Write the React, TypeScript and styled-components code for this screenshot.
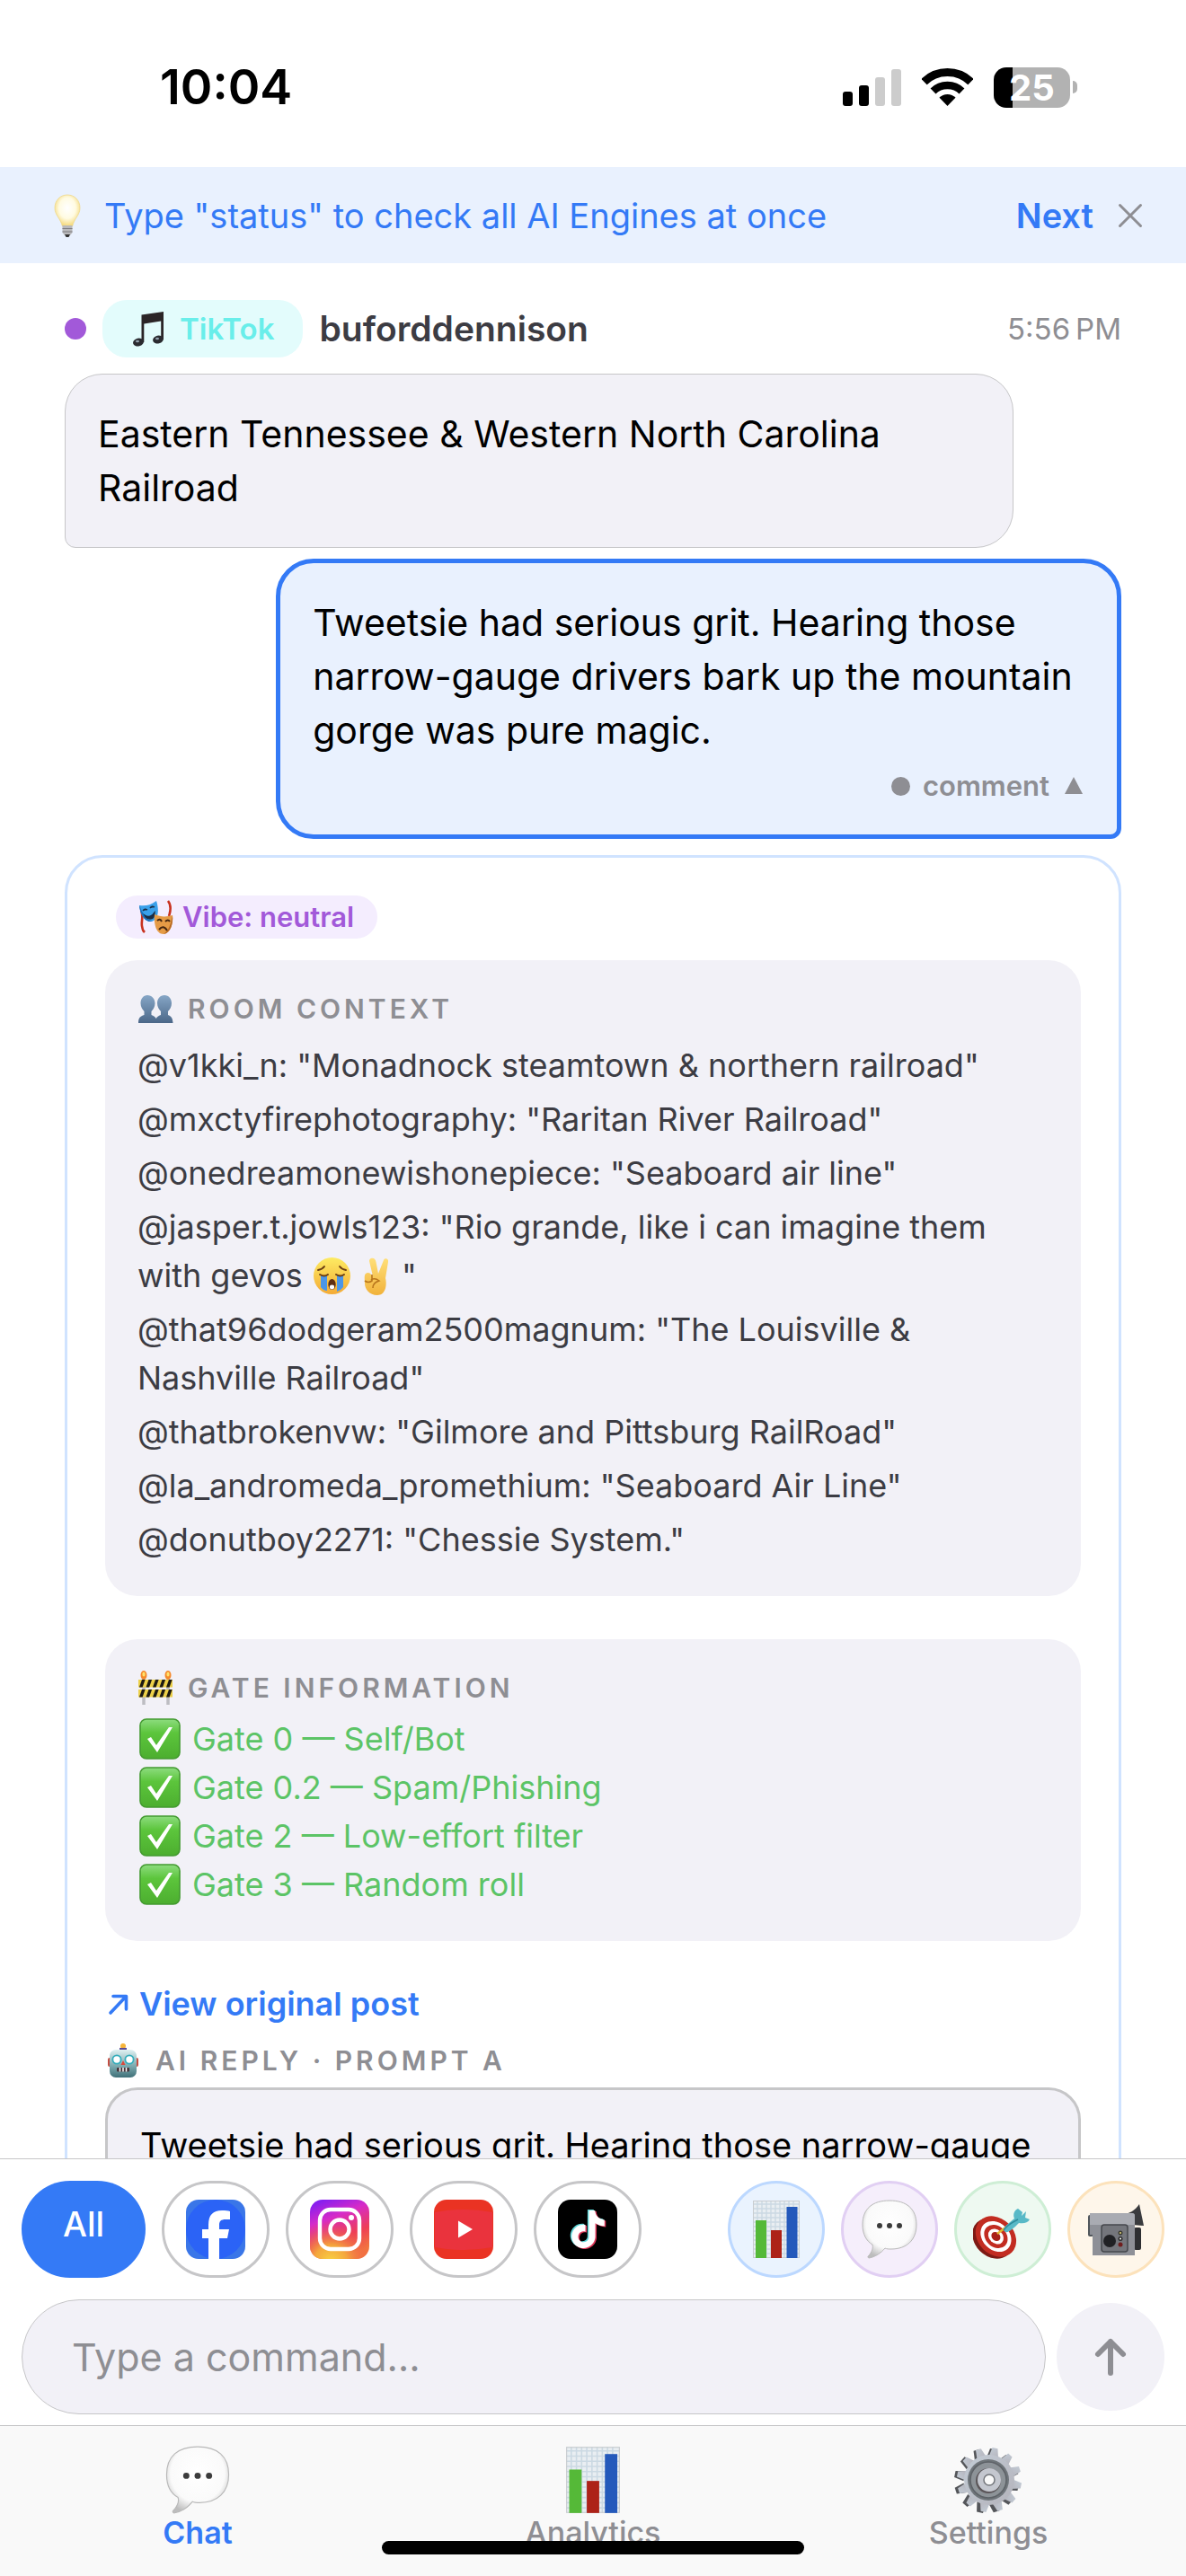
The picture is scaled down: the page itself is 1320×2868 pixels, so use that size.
import React, { useState } from "react";
import styled, { createGlobalStyle } from "styled-components";

const GlobalStyle = createGlobalStyle`
  *, *::before, *::after { box-sizing: border-box; }
  html, body { margin: 0; padding: 0; background: #ffffff; }
  body {
    font-family: Inter, "Liberation Sans", sans-serif;
    color: #000000;
    -webkit-font-smoothing: antialiased;
  }
  button, input { font: inherit; color: inherit; margin: 0; }
  button { background: none; border: 0; padding: 0; cursor: pointer; }
  svg { display: block; flex: none; }
`;

/* ---------- layout ---------- */

const Screen = styled.div`
  display: flex;
  flex-direction: column;
  height: 100vh;
  overflow: hidden;
  position: relative;
`;

const StatusBar = styled.header`
  display: flex;
  justify-content: space-between;
  align-items: center;
  padding: 67px 121px 59px 178px;
`;

const Clock = styled.time`
  font-size: 54px;
  line-height: 60px;
  font-weight: 600;
`;

const StatusIcons = styled.div`
  display: flex;
  align-items: center;
  gap: 23px;
`;

const Battery = styled.div`
  display: flex;
  align-items: center;
  gap: 3px;
`;

const BatteryBody = styled.div<{ $level: number }>`
  width: 85px;
  border-radius: 14px;
  background: linear-gradient(to right, #000 ${(p) => p.$level}%, #b2b2b2 ${(p) => p.$level}%);
  color: #fff;
  font-size: 40px;
  font-weight: 700;
  line-height: 45px;
  text-align: center;
`;

const BatteryTip = styled.div`
  width: 5px;
  height: 14px;
  border-radius: 0 6px 6px 0;
  background: #b2b2b2;
`;

const Tip = styled.section`
  display: flex;
  align-items: center;
  padding: 27px 48px 26px 51px;
  gap: 17px;
  background: #e9f1fe;
  color: #347af6;
  font-size: 38px;
  line-height: 54px;
`;

const TipText = styled.p`
  flex: 1;
  margin: 0;
`;

const TipNext = styled.button`
  font-weight: 600;
  line-height: 54px;
  margin-right: 10px;
`;

const Feed = styled.main`
  flex: 1;
  min-height: 0;
  overflow: hidden;
  display: flex;
  flex-direction: column;
  padding: 41px 72px 0;
`;

const MessageHead = styled.div`
  display: flex;
  align-items: center;
  gap: 18px;
  margin-bottom: 18px;
  flex: none;
`;

const Dot = styled.span<{ $size: number; $color: string }>`
  flex: none;
  width: ${(p) => p.$size}px;
  height: ${(p) => p.$size}px;
  border-radius: 50%;
  background: ${(p) => p.$color};
`;

const SourceTag = styled.span`
  display: flex;
  align-items: center;
  gap: 15px;
  padding: 0 32px 0 31px;
  border-radius: 27px;
  background: #e3fcfc;
  color: #69eeea;
  font-size: 33px;
  line-height: 64px;
  font-weight: 600;
`;

const Author = styled.strong`
  flex: 1;
  color: #3c3c43;
  font-size: 39px;
  line-height: 54px;
  font-weight: 600;
`;

const Stamp = styled.time`
  color: #8e8e93;
  font-size: 33px;
  line-height: 48px;
`;

const Bubble = styled.div<{ $own?: boolean }>`
  flex: none;
  align-self: ${(p) => (p.$own ? "flex-end" : "flex-start")};
  width: ${(p) => (p.$own ? "80%" : "80vw")};
  padding: 36px;
  border: ${(p) => (p.$own ? "5px solid #347af6" : "1px solid #c6c6c8")};
  border-radius: ${(p) => (p.$own ? "42px 42px 12px 42px" : "42px 42px 42px 12px")};
  background: ${(p) => (p.$own ? "#e9f1fe" : "#f2f1f7")};
  margin-bottom: ${(p) => (p.$own ? "18px" : "12px")};
`;

const BubbleText = styled.p`
  margin: 0;
  font-size: 41px;
  line-height: 60px;
`;

const BubbleMeta = styled.button`
  display: flex;
  align-items: center;
  gap: 14px;
  margin: 14px 0 0 auto;
  color: #8e8e93;
  font-size: 31px;
  line-height: 36px;
  font-weight: 600;
`;

const Card = styled.article`
  flex: none;
  display: flex;
  flex-direction: column;
  align-items: stretch;
  padding: 42px 42px 60px;
  border: 3px solid #d0e3ff;
  border-radius: 42px;
`;

const Vibe = styled.span`
  align-self: flex-start;
  display: flex;
  align-items: center;
  gap: 10px;
  margin: 0 0 24px 12px;
  padding: 0 26px 0 24px;
  border-radius: 24px;
  background: #f4edfe;
  color: #a259d9;
  font-size: 31px;
  line-height: 48px;
  font-weight: 600;
`;

const Panel = styled.section`
  padding: 36px;
  margin-bottom: 48px;
  border-radius: 36px;
  background: #f2f1f7;
`;

const Heading = styled.h2`
  display: flex;
  align-items: center;
  gap: 16px;
  height: 36px;
  margin: 0 0 12px;
  color: #8e8e93;
  font-size: 30px;
  line-height: 36px;
  font-weight: 600;
  letter-spacing: 4px;
`;

const List = styled.ul<{ $color: string; $gap: number }>`
  list-style: none;
  margin: 0;
  padding: 0;
  color: ${(p) => p.$color};
  font-size: 36px;
  line-height: 54px;

  li { padding-top: ${(p) => p.$gap}px; }
`;

const Inline = styled.span`
  display: inline-block;
  vertical-align: -10px;
  height: 45px;
  margin-right: 5px;
`;

const Gate = styled.li`
  display: flex;
  align-items: center;
  gap: 10px;
`;

const PostLink = styled.a`
  align-self: flex-start;
  display: flex;
  align-items: center;
  gap: 8px;
  margin: -5px 0 18px;
  color: #347af6;
  font-size: 36px;
  line-height: 54px;
  font-weight: 600;
  text-decoration: none;
`;

const Draft = styled.p`
  margin: 0;
  padding: 36px;
  border: 3px solid #c6c6c8;
  border-radius: 36px;
  background: #f2f1f7;
  font-size: 38px;
  line-height: 50px;
`;

const Composer = styled.footer`
  flex: none;
  padding: 24px 24px 12px;
  border-top: 1px solid #c6c6c8;
  background: #fff;
`;

const Row = styled.div`
  display: flex;
  align-items: center;
  justify-content: space-between;
`;

const Group = styled.div`
  display: flex;
  gap: 18px;
`;

const AllFilter = styled.button`
  height: 108px;
  padding: 0 46px 12px;
  border-radius: 54px;
  background: #347af6;
  color: #fff;
  font-size: 38px;
  font-weight: 500;
`;

const PlatformFilter = styled.button`
  display: grid;
  place-items: center;
  width: 120px;
  height: 108px;
  border: 3px solid #c6c6c8;
  border-radius: 54px;
`;

const Shortcut = styled.button<{ $fill: string; $line: string }>`
  display: grid;
  place-items: center;
  width: 108px;
  height: 108px;
  border: 3px solid ${(p) => p.$line};
  border-radius: 50%;
  background: ${(p) => p.$fill};
`;

const CommandForm = styled.form`
  display: flex;
  align-items: center;
  gap: 12px;
  margin-top: 24px;
`;

const Command = styled.input`
  flex: 1;
  min-width: 0;
  height: 128px;
  padding: 0 55px;
  border: 1px solid #c6c6c8;
  border-radius: 64px;
  background: #f2f1f7;
  font-size: 43px;
  outline: none;

  &::placeholder { color: #8e8e93; opacity: 1; }
`;

const Send = styled.button`
  display: grid;
  place-items: center;
  width: 120px;
  height: 120px;
  border-radius: 50%;
  background: #f2f1f7;
`;

const Tabs = styled.nav`
  flex: none;
  display: flex;
  border-top: 1px solid #c6c6c8;
  background: #f9f9f9;
`;

const Tab = styled.button<{ $active: boolean }>`
  flex: 1 1 0;
  display: flex;
  flex-direction: column;
  align-items: center;
  gap: 1px;
  padding: 22px 0 28px;
  color: ${(p) => (p.$active ? "#347af6" : "#8e8e93")};
  font-size: 34px;
  line-height: 40px;
  font-weight: ${(p) => (p.$active ? 600 : 500)};
`;

const HomeIndicator = styled.div`
  position: absolute;
  left: 50%;
  bottom: 24px;
  width: 470px;
  height: 15px;
  margin-left: -235px;
  border-radius: 8px;
  background: #000;
`;

/* ---------- drawings ---------- */

type IconProps = { size: number };

const Signal = () => (
  <svg width="65" height="42" viewBox="0 0 65 42">
    <rect x="0" y="26" width="11" height="16" rx="3" />
    <rect x="18" y="19" width="11" height="23" rx="3" />
    <rect x="36" y="10" width="11" height="32" rx="3" fill="#ccc" />
    <rect x="54" y="1" width="11" height="41" rx="3" fill="#ccc" />
  </svg>
);

const Wifi = () => (
  <svg width="57" height="42" viewBox="0 0 57 42">
    <clipPath id="wifi"><path d="M28.500 42L-3 9.500V-5H60V9.500z" /></clipPath>
    <g clipPath="url(#wifi)" fill="none" stroke="#000">
      <circle cx="28.500" cy="42" r="37.500" strokeWidth="9" />
      <circle cx="28.500" cy="42" r="23" strokeWidth="8.500" />
      <circle cx="28.500" cy="42" r="13" fill="#000" stroke="none" />
    </g>
  </svg>
);

const Bulb = () => (
  <svg width="48" height="50" viewBox="0 0 48 50">
    <defs>
      <radialGradient id="bulb" cx=".5" cy=".42" r=".6">
        <stop offset="0" stopColor="#fff" /><stop offset=".55" stopColor="#fffbe2" /><stop offset="1" stopColor="#f3d56e" />
      </radialGradient>
    </defs>
    <path d="M24 2c8.500 0 14 6.500 14 14.500 0 8-6 11-8.500 20.500h-11C16 27.500 10 24.500 10 16.500 10 8.500 15.500 2 24 2z" fill="url(#bulb)" stroke="#efd88c" strokeWidth=".8" />
    <path d="M18.500 36h11v8l-2.500 3h-6l-2.500-3z" fill="#b9b9bb" />
    <path d="M18.500 39.500h11M18.500 43h11" stroke="#7d7d80" strokeWidth="1.200" />
    <path d="M21 46h6l-1.500 3h-3z" fill="#333" />
  </svg>
);

const Close = () => (
  <svg width="28" height="28" viewBox="0 0 28 28" fill="none" stroke="#8e8e93" strokeWidth="3" strokeLinecap="round">
    <path d="M2.500 2.500l23 23M25.500 2.500l-23 23" />
  </svg>
);

const Note = ({ size }: IconProps) => (
  <svg width={size} height={size} viewBox="0 0 40 40">
    <path d="M12.500 4.500L37 1v31h-2.800V11.500L15.300 14.500V35h-2.800z" fill="#2b2527" />
    <ellipse cx="9" cy="35" rx="6" ry="4.500" fill="#2b2b30" transform="rotate(-14 9 35)" />
    <ellipse cx="31" cy="32" rx="6" ry="4.500" fill="#2b2b30" transform="rotate(-14 31 32)" />
    <ellipse cx="8" cy="34" rx="2" ry="1.300" fill="#93a0ad" /><ellipse cx="30" cy="31" rx="2" ry="1.300" fill="#93a0ad" />
  </svg>
);

const Masks = ({ size }: IconProps) => (
  <svg width={size} height={size} viewBox="0 0 40 40">
    <path d="M4 13c3 6 0 12 1 17s1 5 3 7M34 2c4 5 3 11 1 17" fill="none" stroke="#c8321f" strokeWidth="2.600" />
    <path d="M2 7c7 1 12 0 19-5 3 9 3 20-5 23C8 26 3 17 2 7z" fill="#3aa0ea" />
    <path d="M2 7c4 9 7 15 14 18-8 1-13-8-14-18z" fill="#1c6fb8" />
    <path d="M6 13q2-3 5-1M14 10q2-3 5-1M8 18q6 4 11-3 0 7-5 7-4 0-6-4z" fill="#1b2d45" stroke="#1b2d45" strokeWidth="1.400" />
    <path d="M19 17c7 3 13 3 20 1 1 9-2 20-10 21-8 0-11-11-10-22z" fill="#e59b46" />
    <path d="M39 18c1 9-2 20-10 21 6-4 8-11 10-21z" fill="#b86a24" />
    <path d="M22 24q3-3 5 1M31 25q3-3 5 0M24 34q5-6 9 1" fill="none" stroke="#442610" strokeWidth="2" />
  </svg>
);

const People = ({ size }: IconProps) => (
  <svg width={size} height={size} viewBox="0 0 40 40">
    <defs><linearGradient id="ppl" x1="0" y1="0" x2="0" y2="1"><stop offset="0" stopColor="#86a6c6" /><stop offset="1" stopColor="#4b6788" /></linearGradient></defs>
    <path d="M11 5c5 0 8.500 4 8.500 9 0 4-2 7-4 9v4c3 1.500 6 2 6.500 9H1c0-6 2-7.500 6.500-9v-4c-2-2-4-5-4-9 0-5 3-9 7.500-9z" fill="url(#ppl)" />
    <path d="M30 5c5 0 8 4 8 9 0 4-2 7-4 9v4c3 1.500 5 2 5.500 9H20c0-6 2-7.500 6-9v-4c-2-2-4-5-4-9 0-5 3-9 8-9z" fill="url(#ppl)" />
  </svg>
);

const Barrier = ({ size }: IconProps) => (
  <svg width={size} height={size} viewBox="0 0 40 40">
    <path d="M7 10v29M34 10v29" stroke="#bdbdc2" strokeWidth="3.500" />
    {[7, 34].map((x) => (
      <g key={x}><ellipse cx={x} cy="6" rx="3.500" ry="5" fill="#f58a2c" /><ellipse cx={x} cy="5" rx="1.600" ry="2.600" fill="#ffe36b" /></g>
    ))}
    {[11, 22].map((y) => (
      <g key={y}>
        <rect x="1" y={y} width="38" height="8.500" fill="#ecd049" />
        {[2, 9.5, 17, 24.5, 32].map((x) => (
          <path key={x} d={`M${x} ${y + 8.5}l3-8.500h3.600l-3 8.500z`} fill="#1c1a12" />
        ))}
      </g>
    ))}
  </svg>
);

const Robot = ({ size }: IconProps) => (
  <svg width={size} height={size} viewBox="0 0 40 40">
    <defs><linearGradient id="bot" x1="0" y1="0" x2="0" y2="1"><stop offset="0" stopColor="#dff1f2" /><stop offset=".6" stopColor="#7aa8ad" /><stop offset="1" stopColor="#3f7078" /></linearGradient></defs>
    <circle cx="20" cy="4" r="3" fill="#f6b53a" /><path d="M16 6h8v4h-8z" fill="#5a4a94" />
    <rect x="3" y="17" width="4" height="10" rx="2" fill="#c44d42" /><rect x="33" y="17" width="4" height="10" rx="2" fill="#c44d42" />
    <rect x="5" y="8" width="30" height="31" rx="7" fill="url(#bot)" />
    <circle cx="13" cy="19" r="4.600" fill="#fff" stroke="#35aebc" strokeWidth="1.800" /><circle cx="27" cy="19" r="4.600" fill="#fff" stroke="#35aebc" strokeWidth="1.800" />
    <path d="M20 20l2.500 5h-5z" fill="#d9493c" />
    <rect x="13" y="28" width="14" height="4.500" rx="1" fill="#45343a" /><path d="M16.500 28v4.500M20 28v4.500M23.500 28v4.500" stroke="#fff" strokeWidth="1.500" />
  </svg>
);

const CryFace = () => (
  <svg width="45" height="45" viewBox="0 0 45 45">
    <defs><linearGradient id="cry" x1="0" y1="0" x2="0" y2="1"><stop offset="0" stopColor="#fdeb62" /><stop offset="1" stopColor="#f4ab36" /></linearGradient></defs>
    <circle cx="22.500" cy="22.500" r="20.500" fill="url(#cry)" />
    <path d="M10 22h7v17q-4 0-7-4zM28 22h7v13q-3 4-7 5z" fill="#4b96e8" />
    <path d="M7 16q5-1 7-4M38 16q-5-1-7-4M9 21q5 3 9 0M27 21q5 3 9 0" fill="none" stroke="#6b3e12" strokeWidth="2" strokeLinecap="round" />
    <ellipse cx="22.500" cy="32" rx="4.200" ry="6" fill="#5f2f12" /><ellipse cx="22.500" cy="35" rx="2.600" ry="2.400" fill="#fff" />
  </svg>
);

const Victory = () => (
  <svg width="45" height="45" viewBox="0 0 45 45">
    <defs><linearGradient id="vic" x1="0" y1="0" x2="0" y2="1"><stop offset="0" stopColor="#ffdf78" /><stop offset="1" stopColor="#f1b23a" /></linearGradient></defs>
    <path d="M16 3c3-1 5 1 5.500 4L24 20l6-15c1-3 6-2 5 2l-3 18c2 8 0 19-9 19-9 0-14-7-14-13 0-5-1-9 1-11s5-1 6 1l2 2-4-17c0-1.500.5-2.500 2-3z" fill="url(#vic)" />
    <path d="M9 28q4 3 8 0v-7M16 27q4-3 9 1-7 2-7 8" fill="none" stroke="#b9761c" strokeWidth="1.600" />
  </svg>
);

const Check = () => (
  <svg width="51" height="48" viewBox="0 0 51 48">
    <defs><linearGradient id="chk" x1="0" y1="0" x2="0" y2="1"><stop offset="0" stopColor="#8ddc7f" /><stop offset=".35" stopColor="#5cc53c" /><stop offset="1" stopColor="#4cae2f" /></linearGradient></defs>
    <rect x="3" y="2" width="44" height="44" rx="7" fill="url(#chk)" stroke="#439a30" strokeWidth="1.600" />
    <path d="M11 24l4-2 6 9 14-20h4L22 39z" fill="#fff" />
  </svg>
);

const ArrowNE = () => (
  <svg width="30" height="30" viewBox="0 0 30 30" fill="none" stroke="#347af6" strokeWidth="3.600" strokeLinecap="round" strokeLinejoin="round">
    <path d="M6 25L23 7M9 6.500h14.500V21" />
  </svg>
);

const Chart = ({ size }: IconProps) => (
  <svg width={size} height={size} viewBox="0 0 66 66">
    <rect x="7" y="1" width="52" height="64" fill="#e9eef2" />
    <path d="M7 5h52M7 10h52M7 15h52M7 20h52M7 25h52M7 30h52M7 35h52M7 40h52M7 45h52M7 50h52M7 55h52M7 60h52M12 1v64M17 1v64M22 1v64M27 1v64M32 1v64M37 1v64M42 1v64M47 1v64M52 1v64" stroke="#cbd9e3" strokeWidth="1.400" />
    <rect x="7.500" y="1.500" width="51" height="63" fill="none" stroke="#c9cdd0" />
    <rect x="10" y="23" width="12" height="42" fill="#55b938" />
    <rect x="27" y="34" width="12" height="31" fill="#ad2218" />
    <rect x="44.500" y="8" width="12" height="57" fill="#2459bb" />
  </svg>
);

const Speech = ({ size }: IconProps) => (
  <svg width={size} height={size} viewBox="0 0 66 66">
    <defs><radialGradient id="spk" cx=".5" cy=".4" r=".62"><stop offset="0" stopColor="#fff" /><stop offset=".7" stopColor="#fafafa" /><stop offset="1" stopColor="#bdbdbd" /></radialGradient></defs>
    <path d="M33 1c19 0 30 9 30 27 0 17-11 27-28 27-3 0-5 0-7-1-4 5-11 10-18 11-2-1-1-2 1-4 3-4 4-8 3-11C7 46 3 38 3 28 3 10 14 1 33 1z" fill="url(#spk)" stroke="#b9b9b9" strokeWidth="1" />
    <g fill="#3c3c3c"><circle cx="22" cy="29" r="3" /><circle cx="33" cy="29" r="3" /><circle cx="44" cy="29" r="3" /></g>
  </svg>
);

const Target = ({ size }: IconProps) => (
  <svg width={size} height={size} viewBox="0 0 66 66">
    <g transform="rotate(45 24 41)">
      <ellipse cx="24" cy="44" rx="25" ry="20" fill="#7d1a14" />
      <ellipse cx="25" cy="40" rx="25" ry="20" fill="#c22c21" />
      <ellipse cx="25" cy="40" rx="19" ry="15" fill="#fff" />
      <ellipse cx="25" cy="40" rx="14.500" ry="11.500" fill="#c22c21" />
      <ellipse cx="25" cy="40" rx="9.500" ry="7.500" fill="#fff" />
      <ellipse cx="25" cy="40" rx="5.500" ry="4.500" fill="#a92018" />
    </g>
    <path d="M27 38l9-7" stroke="#e4b92e" strokeWidth="2.400" />
    <path d="M34 34c0-4 5-7 12-13-2-5 0-9 4-11l5 4-1 4 5-5-1 7 5 2c-2 4-7 5-12 4-6 6-11 11-15 10z" fill="#58b9c7" />
    <path d="M34 34c4-6 10-9 16-12" stroke="#2e8b9b" strokeWidth="1.600" fill="none" />
  </svg>
);

const Camera = ({ size }: IconProps) => (
  <svg width={size} height={size} viewBox="0 0 66 66">
    <path d="M37 17c12-1 17-5 22-12l5 24-12-1z" fill="#3a3b3e" />
    <rect x="53" y="31" width="8" height="25" rx="2" fill="#2e2f32" />
    <rect x="2" y="17" width="6" height="24" rx="2" fill="#50565c" />
    <path d="M4 15h47q3 0 3 3v44H7V39H4z" fill="#8e9097" />
    <path d="M4 15h47q3 0 3 3v10H4z" fill="#a9abb2" />
    <rect x="17" y="28" width="29" height="30" rx="3" fill="#74767c" stroke="#46484d" strokeWidth="1.500" />
    <circle cx="26" cy="46" r="7" fill="#202124" />
    <circle cx="38" cy="37" r="2.500" fill="#3b3b33" /><circle cx="38" cy="43.500" r="2.500" fill="#2c2c2c" /><circle cx="38" cy="50" r="2.500" fill="#6f1d1d" />
    <circle cx="38" cy="37" r="1" fill="#e6d778" /><circle cx="38" cy="43.500" r="1" fill="#fff" />
  </svg>
);

const Gear = ({ size }: IconProps) => {
  const teeth = Array.from({ length: 12 }, (_, i) => i * 30 + 12);
  return (
    <svg width={size} height={size} viewBox="0 0 76 76">
      <defs><linearGradient id="gear" x1="0" y1="0" x2="1" y2="1"><stop offset="0" stopColor="#c3ccd6" /><stop offset="1" stopColor="#b4b3bb" /></linearGradient></defs>
      <g fill="#54565a" transform="translate(-2 1)">
        {teeth.map((a) => <path key={a} d="M32.500 13l2-11h7l2 11z" transform={`rotate(${a} 38 38)`} />)}
      </g>
      <g fill="url(#gear)">
        {teeth.map((a) => <path key={a} d="M33 13l2-11h6l3 11z" transform={`rotate(${a} 39 38)`} />)}
        <circle cx="39" cy="38" r="28" />
      </g>
      <circle cx="38" cy="38" r="23" fill="#6f757a" />
      <circle cx="38" cy="38" r="20" fill="#8d9398" stroke="#5d6267" strokeWidth="1.500" />
      <circle cx="38" cy="39" r="14" fill="#5b5659" />
      <circle cx="39" cy="38" r="9.500" fill="#f9f9f9" stroke="#c4c7cf" strokeWidth="7" />
      <circle cx="39" cy="38" r="6" fill="none" stroke="#74777c" strokeWidth="1.500" />
    </svg>
  );
};

const Facebook = () => (
  <svg width="66" height="66" viewBox="0 0 66 66">
    <clipPath id="sq"><rect width="66" height="66" rx="14" /></clipPath>
    <g clipPath="url(#sq)">
      <rect width="66" height="66" fill="#3a76e8" />
      <circle cx="33" cy="33" r="33" fill="#2b63f6" />
      <path d="M25 66V43h-7V33h7v-5c0-11 5-16 15-16 4 0 7 .4 9 1v9h-5c-5 0-7 2-7 6v5h11l-2 10h-9v23z" fill="#fff" />
    </g>
  </svg>
);

const Instagram = () => (
  <svg width="66" height="66" viewBox="0 0 66 66">
    <defs>
      <linearGradient id="igA" x1=".1" y1="0" x2=".5" y2="1"><stop offset="0" stopColor="#7a1cf5" /><stop offset=".35" stopColor="#d62bc8" /><stop offset=".7" stopColor="#ee3e55" /><stop offset="1" stopColor="#f2783c" /></linearGradient>
      <radialGradient id="igB" cx=".35" cy="1.050" r=".7"><stop offset="0" stopColor="#f8d343" /><stop offset=".4" stopColor="#f4a63d" /><stop offset="1" stopColor="#ee3e55" stopOpacity="0" /></radialGradient>
    </defs>
    <rect width="66" height="66" rx="14" fill="url(#igA)" /><rect width="66" height="66" rx="14" fill="url(#igB)" />
    <g fill="none" stroke="#fff" strokeWidth="4.400"><rect x="11" y="11" width="44" height="44" rx="12" /><circle cx="33" cy="33" r="10.500" /></g>
    <circle cx="46" cy="20" r="3" fill="#fff" />
  </svg>
);

const YouTube = () => (
  <svg width="66" height="66" viewBox="0 0 66 66">
    <rect width="66" height="66" rx="14" fill="#ea3323" />
    <path d="M1 14Q33 8 65 14V53Q33 59 1 53z" fill="#ea333d" />
    <path d="M27 23.500L43 33 27 42.500z" fill="#fff" />
  </svg>
);

const NOTE_PATH =
  "M12.525.02c1.31-.02 2.61-.01 3.91-.02.08 1.53.63 3.09 1.75 4.17 1.12 1.11 2.7 1.62 4.24 1.79v4.03c-1.44-.05-2.89-.35-4.2-.97-.57-.26-1.1-.59-1.62-.93-.01 2.92.01 5.84-.02 8.75-.08 1.4-.54 2.79-1.35 3.94-1.31 1.92-3.58 3.17-5.91 3.21-1.43.08-2.86-.31-4.08-1.03-2.02-1.19-3.44-3.37-3.65-5.71-.02-.5-.03-1-.01-1.49.18-1.9 1.12-3.72 2.58-4.96 1.66-1.44 3.98-2.13 6.15-1.72.02 1.48-.04 2.96-.04 4.44-.99-.32-2.15-.23-3.02.37-.63.41-1.11 1.04-1.36 1.75-.21.51-.15 1.07-.14 1.61.24 1.64 1.82 3.02 3.5 2.87 1.12-.01 2.19-.66 2.77-1.61.19-.33.4-.67.41-1.06.1-1.79.06-3.57.07-5.36.01-4.03-.01-8.05.02-12.07z";

const TikTok = () => (
  <svg width="66" height="66" viewBox="0 0 66 66">
    <rect width="66" height="66" rx="14" fill="#000" />
    <path d={NOTE_PATH} fill="#5fd6d8" transform="translate(11 11) scale(1.750)" />
    <path d={NOTE_PATH} fill="#e0395a" transform="translate(14 13) scale(1.750)" />
    <path d={NOTE_PATH} fill="#fff" transform="translate(12.500 12) scale(1.750)" />
  </svg>
);

const Triangle = () => (
  <svg width="25" height="24" viewBox="0 0 25 24"><path d="M13 2L23 21H3z" fill="#8e8e93" /></svg>
);

const ArrowUp = () => (
  <svg width="40" height="44" viewBox="0 0 40 44" fill="none" stroke="#8e8e93" strokeWidth="6" strokeLinecap="round" strokeLinejoin="round">
    <path d="M20 40V5M6 19L20 5l14 14" />
  </svg>
);

/* ---------- content ---------- */

const GATES = ["Gate 0 — Self/Bot", "Gate 0.2 — Spam/Phishing", "Gate 2 — Low-effort filter", "Gate 3 — Random roll"];

const PLATFORMS = [
  { name: "Facebook", Icon: Facebook },
  { name: "Instagram", Icon: Instagram },
  { name: "YouTube", Icon: YouTube },
  { name: "TikTok", Icon: TikTok },
];

const SHORTCUTS = [
  { name: "Stats", Icon: Chart, fill: "#eaf3fe", line: "#bcd8ff" },
  { name: "Replies", Icon: Speech, fill: "#f5eefb", line: "#e1cff3" },
  { name: "Targets", Icon: Target, fill: "#eef9f1", line: "#ceeed5" },
  { name: "Video", Icon: Camera, fill: "#fef6ea", line: "#fce2bb" },
];

const TABS = [
  { name: "Chat", Icon: Speech },
  { name: "Analytics", Icon: Chart },
  { name: "Settings", Icon: Gear },
];

export default function App() {
  const [tab, setTab] = useState("Chat");
  const [command, setCommand] = useState("");

  return (
    <Screen>
      <GlobalStyle />
      <StatusBar>
        <Clock>10:04</Clock>
        <StatusIcons>
          <Signal />
          <Wifi />
          <Battery>
            <BatteryBody $level={25}>25</BatteryBody>
            <BatteryTip />
          </Battery>
        </StatusIcons>
      </StatusBar>

      <Tip>
        <Bulb />
        <TipText>Type "status" to check all AI Engines at once</TipText>
        <TipNext type="button">Next</TipNext>
        <button type="button" aria-label="Dismiss tip"><Close /></button>
      </Tip>

      <Feed>
        <MessageHead>
          <Dot $size={24} $color="#a259d9" />
          <SourceTag><Note size={40} />TikTok</SourceTag>
          <Author>buforddennison</Author>
          <Stamp>5:56{"\u202F"}PM</Stamp>
        </MessageHead>
        <Bubble>
          <BubbleText>Eastern Tennessee &amp; Western North Carolina Railroad</BubbleText>
        </Bubble>
        <Bubble $own>
          <BubbleText>
            Tweetsie had serious grit. Hearing those narrow-gauge drivers bark up the mountain gorge was pure magic.
          </BubbleText>
          <BubbleMeta type="button">
            <Dot $size={21} $color="#8e8e93" />
            comment
            <Triangle />
          </BubbleMeta>
        </Bubble>

        <Card>
          <Vibe><Masks size={40} />Vibe: neutral</Vibe>
          <Panel>
            <Heading><People size={40} />ROOM CONTEXT</Heading>
            <List $color="#3c3c43" $gap={6}>
              <li>@v1kki_n: "Monadnock steamtown &amp; northern railroad"</li>
              <li>@mxctyfirephotography: "Raritan River Railroad"</li>
              <li>@onedreamonewishonepiece: "Seaboard air line"</li>
              <li>
                @jasper.t.jowls123: "Rio grande, like i can imagine them with gevos{" "}
                <Inline><CryFace /></Inline><Inline><Victory /></Inline>"
              </li>
              <li>@that96dodgeram2500magnum: "The Louisville &amp; Nashville Railroad"</li>
              <li>@thatbrokenvw: "Gilmore and Pittsburg RailRoad"</li>
              <li>@la_andromeda_promethium: "Seaboard Air Line"</li>
              <li>@donutboy2271: "Chessie System."</li>
            </List>
          </Panel>
          <Panel>
            <Heading><Barrier size={40} />GATE INFORMATION</Heading>
            <List $color="#5cc466" $gap={0}>
              {GATES.map((g) => <Gate key={g}><Check />{g}</Gate>)}
            </List>
          </Panel>
          <PostLink href="#post"><ArrowNE />View original post</PostLink>
          <Heading><Robot size={40} />AI REPLY · PROMPT A</Heading>
          <Draft>
            Tweetsie had serious grit. Hearing those narrow-gauge drivers bark up the mountain gorge was pure magic.
          </Draft>
        </Card>
      </Feed>

      <Composer>
        <Row>
          <Group>
            <AllFilter type="button" aria-pressed="true">All</AllFilter>
            {PLATFORMS.map(({ name, Icon }) => (
              <PlatformFilter key={name} type="button" aria-label={name}><Icon /></PlatformFilter>
            ))}
          </Group>
          <Group>
            {SHORTCUTS.map(({ name, Icon, fill, line }) => (
              <Shortcut key={name} type="button" aria-label={name} $fill={fill} $line={line}><Icon size={66} /></Shortcut>
            ))}
          </Group>
        </Row>
        <CommandForm onSubmit={(e) => e.preventDefault()}>
          <Command
            aria-label="Command"
            placeholder="Type a command…"
            value={command}
            onChange={(e) => setCommand(e.target.value)}
          />
          <Send type="submit" aria-label="Send"><ArrowUp /></Send>
        </CommandForm>
      </Composer>

      <Tabs>
        {TABS.map(({ name, Icon }) => (
          <Tab key={name} type="button" $active={tab === name} onClick={() => setTab(name)}>
            <Icon size={76} />
            {name}
          </Tab>
        ))}
      </Tabs>
      <HomeIndicator />
    </Screen>
  );
}
